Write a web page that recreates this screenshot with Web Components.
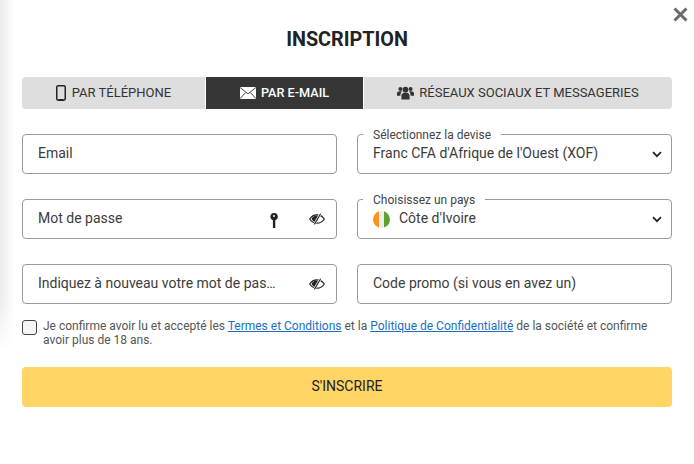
<!DOCTYPE html>
<html lang="fr">
<head>
<meta charset="utf-8">
<title>Inscription</title>
<style>
  html, body { margin: 0; height: 100%; background: #fff; }
  body { font-family: Roboto, "Liberation Sans", sans-serif; overflow: hidden; }
  terms-check a { color: #1a6fc4; }
</style>
</head>
<body>
<signup-modal>
  <span slot="title">INSCRIPTION</span>
  <tab-bar slot="tabs">
    <tab-item icon="phone" style="flex: 183 0 0">PAR TÉLÉPHONE</tab-item>
    <tab-item icon="mail" active style="flex: 157 0 0">PAR E-MAIL</tab-item>
    <tab-item icon="people" style="flex: 308 0 0">RÉSEAUX SOCIAUX ET MESSAGERIES</tab-item>
  </tab-bar>
  <form-field slot="fields" value="Email"></form-field>
  <form-field slot="fields" legend="Sélectionnez la devise" value="Franc CFA d'Afrique de l'Ouest (XOF)" select></form-field>
  <form-field slot="fields" value="Mot de passe" key eye></form-field>
  <form-field slot="fields" legend="Choisissez un pays" value="Côte d'Ivoire" flag select></form-field>
  <form-field slot="fields" value="Indiquez à nouveau votre mot de pas…" eye></form-field>
  <form-field slot="fields" value="Code promo (si vous en avez un)"></form-field>
  <terms-check slot="terms">Je confirme avoir lu et accepté les <a href="#">Termes et Conditions</a> et la <a href="#">Politique de Confidentialité</a> de la société et confirme<br>avoir plus de 18 ans.</terms-check>
  <submit-button slot="submit">S'INSCRIRE</submit-button>
</signup-modal>

<script>
const ICONS = {
  phone: `<svg width="10" height="16" viewBox="0 0 10 16"><rect x=".75" y=".75" width="8.500" height="14.500" rx="1.400" fill="none" stroke="#222" stroke-width="1.500"/><path d="M2.500 14.500h5" stroke="#222" stroke-width="1"/></svg>`,
  mail: `<svg width="16" height="12" viewBox="0 0 16 12"><rect width="16" height="12" fill="#fff"/><path d="M0 .5l8 6.300L16 .5M0 11.700l5.700-6.200M16 11.700l-5.700-6.200" fill="none" stroke="#333" stroke-width=".9"/></svg>`,
  people: `<svg width="17" height="14" viewBox="0 0 17 14" fill="#333"><circle cx="8.500" cy="3.600" r="2.900"/><circle cx="3.400" cy="2.900" r="2"/><circle cx="13.600" cy="2.900" r="2"/><path d="M4.400 13.600V10c0-2.200 1.400-3.400 4.100-3.400s4.100 1.200 4.100 3.400v3.600z"/><path d="M0 9.800V7.400C0 6 1.100 5.300 3.400 5.300c.7 0 1.200.1 1.600.3C3.900 6.500 3.400 7.800 3.400 9.800zM17 9.800V7.400c0-1.400-1.100-2.100-3.400-2.100-.7 0-1.200.1-1.600.3 1.100.9 1.600 2.200 1.600 4.200z"/></svg>`,
  key: `<svg width="8" height="15" viewBox="0 0 8 15"><path d="M4 0a3.700 3.700 0 0 1 1.300 7.200V15H2.900V7.200A3.700 3.700 0 0 1 4 0z" fill="#222"/><circle cx="4" cy="3" r="1" fill="#fff"/></svg>`,
  eye: `<svg width="16" height="12" viewBox="0 0 16 12"><path d="M.7 6C2.500 3.200 5 1.800 8 1.800S13.500 3.200 15.300 6C13.500 8.800 11 10.200 8 10.200S2.500 8.800.7 6z" fill="none" stroke="#222" stroke-width="1.200"/><path d="M2.500 6C3.600 4 5.400 2.700 8 2.600c1 0 1.700.2 2.300.5L6.300 9.400C4.700 8.800 3.400 7.600 2.500 6z" fill="#222"/><path d="M5.200 11.500L11.500.6" stroke="#fff" stroke-width="2.400"/><path d="M5.400 11.400L11.600.8" stroke="#222" stroke-width="1.100"/></svg>`,
  chevron: `<svg width="10" height="7" viewBox="0 0 10 7"><path d="M1 1.200l4 4 4-4" fill="none" stroke="#222" stroke-width="1.700"/></svg>`,
  flag: `<svg width="17" height="17" viewBox="0 0 17 17"><clipPath id="c"><circle cx="8.500" cy="8.500" r="8.500"/></clipPath><g clip-path="url(#c)"><rect width="6" height="17" fill="#f7941e"/><rect x="6" width="5" height="17" fill="#eee"/><rect x="11" width="6" height="17" fill="#5fa12e"/></g></svg>`
};

function define(name, css, html) {
  customElements.define(name, class extends HTMLElement {
    connectedCallback() {
      if (this.shadowRoot) return;
      this.attachShadow({ mode: 'open' });
      this.shadowRoot.innerHTML = `<style>${css}</style>${typeof html === 'function' ? html(this) : html}`;
    }
  });
}

define('signup-modal', `
  :host { display: block; position: relative; height: 464px; box-sizing: border-box; padding: 28px 22px 0; }
  .edge { position: absolute; left: 0; top: 0; width: 15px; height: 352px;
    background: linear-gradient(to right, #ececec, #fff);
    -webkit-mask-image: linear-gradient(to bottom, #000 85%, transparent); }
  .close { position: absolute; top: 7px; right: 6px; width: 15px; height: 15px; }
  h1 { margin: 0 0 26px; height: 23px; font: 700 19.800px/23px Roboto, sans-serif; color: #222; text-align: center; }
  .fields { display: grid; grid-template-columns: 315px 315px; column-gap: 20px; row-gap: 25px; margin: 25px 0 15px; }
  ::slotted(terms-check) { margin-bottom: 20px; }
`, `
  <div class="edge"></div>
  <svg class="close" viewBox="0 0 15 15"><path d="M1.500 1.500l12 12M13.500 1.500l-12 12" stroke="#6b6b6b" stroke-width="3"/></svg>
  <h1><slot name="title"></slot></h1>
  <slot name="tabs"></slot>
  <div class="fields"><slot name="fields"></slot></div>
  <slot name="terms"></slot>
  <slot name="submit"></slot>
`);

define('tab-bar', `
  :host { display: flex; gap: 1px; height: 32px; border-radius: 4px; overflow: hidden; }
`, `<slot></slot>`);

define('tab-item', `
  :host { display: flex; align-items: center; justify-content: center; gap: 5px; background: #dedede; color: #333;
    font: 400 13px Roboto, sans-serif; white-space: nowrap; padding-bottom: 1px; box-sizing: border-box; }
  :host([active]) { background: #363636; color: #fff; font-weight: 500; font-size: 12.700px; }
  :host([icon="phone"]) { gap: 6px; }
  svg { display: block; }
`, el => `${ICONS[el.getAttribute('icon')]}<span><slot></slot></span>`);

define('form-field', `
  :host { display: flex; align-items: center; position: relative; height: 40px; box-sizing: border-box;
    border: 1px solid #9a9a9a; border-radius: 4px; padding: 0 11px 0 15px; color: #3c3c3c;
    font: 400 14px Roboto, sans-serif; background: #fff; }
  .legend { position: absolute; left: 5px; top: -7px; padding: 0 10px; background: #fff; font-size: 12px; line-height: 14px; color: #444; white-space: nowrap; }
  .value { flex: 1; min-width: 0; white-space: nowrap; padding-bottom: 2px; }
  .flag { margin-right: 9px; display: block; margin-top: 1px; }
  .flag svg, .key svg, .eye svg, .chev svg { display: block; }
  .key { margin: 2px -1px 0 0; }
  .eye { margin-left: 32px; }
  .chev { margin: 0 -2px 0 6px; }
`, el => {
  const legend = el.getAttribute('legend');
  return `
    ${legend ? `<span class="legend">${legend}</span>` : ''}
    ${el.hasAttribute('flag') ? `<span class="flag">${ICONS.flag}</span>` : ''}
    <span class="value">${el.getAttribute('value')}</span>
    ${el.hasAttribute('key') ? `<span class="key">${ICONS.key}</span>` : ''}
    ${el.hasAttribute('eye') ? `<span class="eye">${ICONS.eye}</span>` : ''}
    ${el.hasAttribute('select') ? `<span class="chev">${ICONS.chevron}</span>` : ''}
  `;
});

define('terms-check', `
  :host { display: flex; gap: 6px; font: 400 12px/14px Roboto, sans-serif; color: #555; }
  .box { flex: none; width: 13px; height: 13px; border: 1.500px solid #444; border-radius: 3px; background: #f5f5f5; margin-top: 1px; }
  p { margin: 0; }
`, `<span class="box"></span><p><slot></slot></p>`);

define('submit-button', `
  :host { display: flex; align-items: center; justify-content: center; height: 40px; box-sizing: border-box; padding-bottom: 2px; border-radius: 4px;
    background: #ffd566; color: #222; font: 400 14px Roboto, sans-serif; }
`, `<slot></slot>`);
</script>
</body>
</html>
